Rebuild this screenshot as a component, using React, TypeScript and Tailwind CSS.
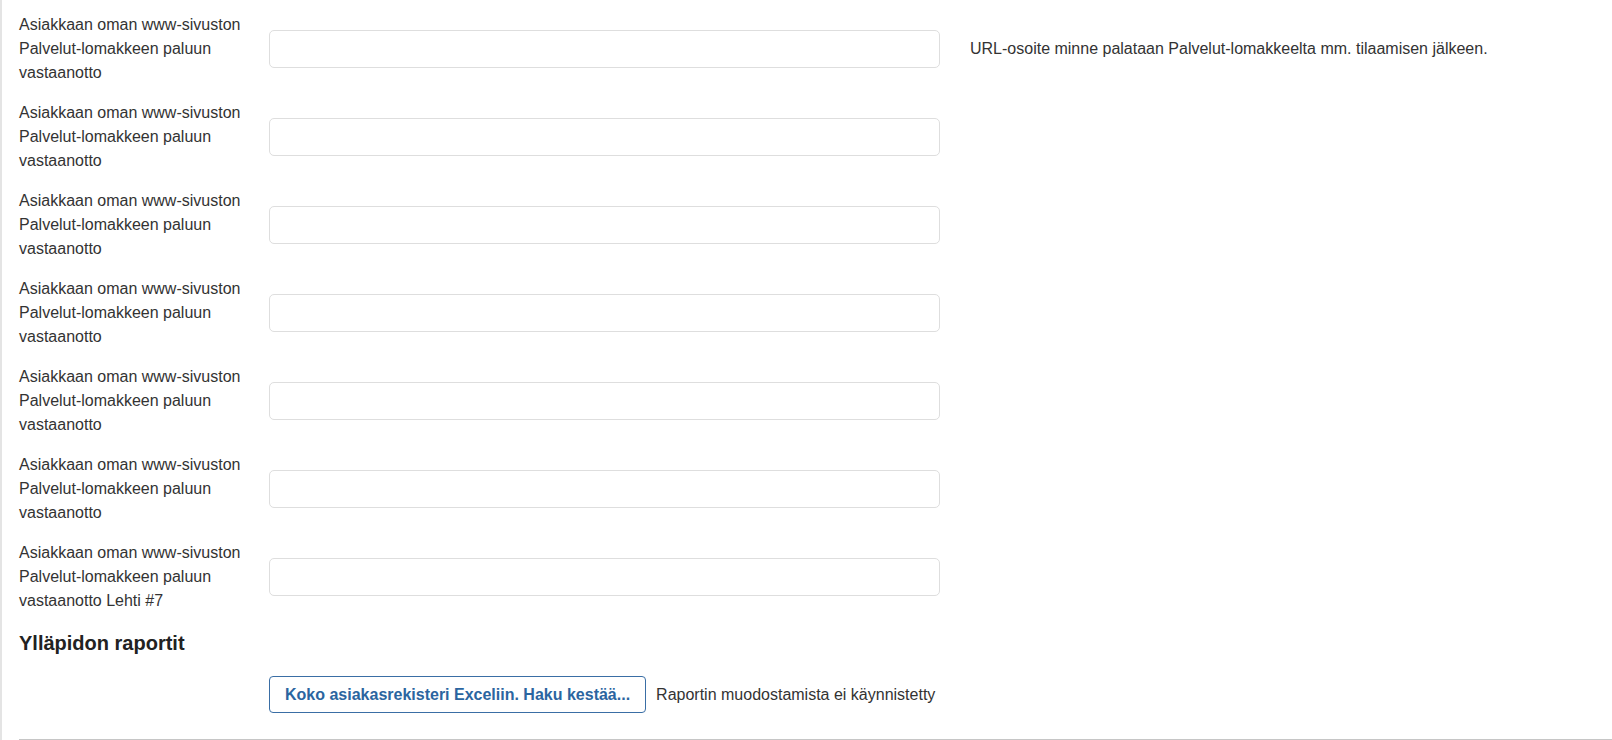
import React from "react";

const rows = [
  { label: "Asiakkaan oman www-sivuston Palvelut-lomakkeen paluun vastaanotto", help: "URL-osoite minne palataan Palvelut-lomakkeelta mm. tilaamisen jälkeen." },
  { label: "Asiakkaan oman www-sivuston Palvelut-lomakkeen paluun vastaanotto" },
  { label: "Asiakkaan oman www-sivuston Palvelut-lomakkeen paluun vastaanotto" },
  { label: "Asiakkaan oman www-sivuston Palvelut-lomakkeen paluun vastaanotto" },
  { label: "Asiakkaan oman www-sivuston Palvelut-lomakkeen paluun vastaanotto" },
  { label: "Asiakkaan oman www-sivuston Palvelut-lomakkeen paluun vastaanotto" },
  { label: "Asiakkaan oman www-sivuston Palvelut-lomakkeen paluun vastaanotto Lehti #7" },
];

export default function App() {
  return (
    <div className="min-h-[740px] bg-white border-l-2 border-[#e4e4e4] pl-[17px] pt-[5px] font-['Liberation_Sans',Arial,sans-serif] text-[16px] leading-6 text-[#333]">
      {rows.map((r, i) => (
        <FieldRow key={i} label={r.label} help={r.help} />
      ))}

      <h3 className="mt-[10px] text-[20px] font-bold leading-6 text-[#222]">Ylläpidon raportit</h3>

      <div className="mt-[21px] pl-[250px] flex items-center">
        <button className="h-[37px] px-[15px] rounded border border-[#3a6ea5] bg-white font-bold text-[#2b65a0]">
          Koko asiakasrekisteri Exceliin. Haku kestää...
        </button>
        <span className="ml-2.5">Raportin muodostamista ei käynnistetty</span>
      </div>

      <div className="mt-[26px] border-t border-[#c6c6c6]" />
    </div>
  );
}

function FieldRow({ label, help }: { label: string; help?: string }) {
  return (
    <div className="flex items-center py-2">
      <label className="w-[250px] shrink-0 pr-3">{label}</label>
      <input type="text" className="w-[671px] h-[38px] shrink-0 rounded-[5px] border border-[#dedede] bg-white px-3 outline-none" />
      {help && <span className="ml-[30px]">{help}</span>}
    </div>
  );
}
